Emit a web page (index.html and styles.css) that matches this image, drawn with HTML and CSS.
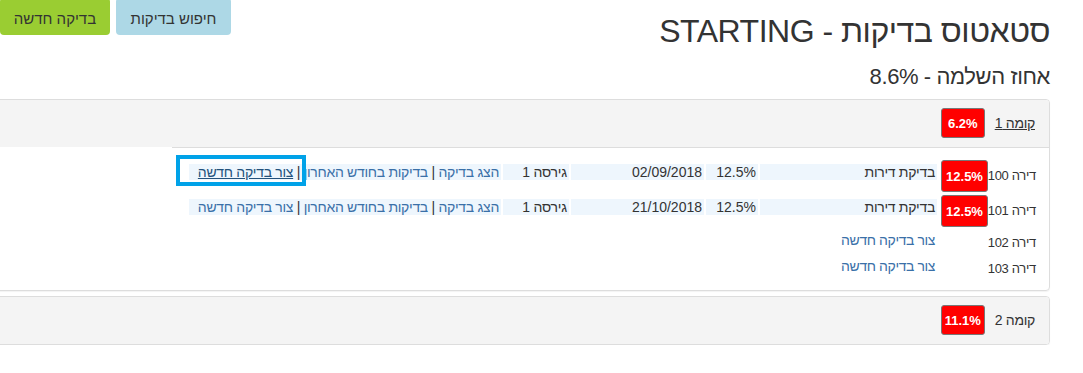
FILE: index.html
```html
<!DOCTYPE html>
<html lang="he" dir="rtl">
<head>
    <meta charset="UTF-8">
    <meta name="viewport" content="width=device-width, initial-scale=1.0">
    <title>סטאטוס בדיקות</title>
    <link rel="stylesheet" href="styles.css">
</head>
<body>
    <div class="page">
        <div class="top-bar">
            <h1 class="page-title">סטאטוס בדיקות - STARTING</h1>
            <div class="actions">
                <button class="btn btn-search">חיפוש בדיקות</button>
                <button class="btn btn-new">בדיקה חדשה</button>
            </div>
        </div>
        <h2 class="progress">אחוז השלמה - 8.6%</h2>

        <div class="panel">
            <div class="panel-heading">
                <a href="#" class="floor-link">קומה 1</a>
                <span class="label label-sm">6.2%</span>
            </div>
            <div class="floor-body">
                <div class="apt">
                    <span class="apt-name">דירה 100</span>
                    <span class="label">12.5%</span>
                    <div class="tests">
                        <span class="c-type">בדיקת דירות</span>
                        <span class="c-pct">12.5%</span>
                        <span class="c-date">02/09/2018</span>
                        <span class="c-ver">גירסה 1</span>
                        <span class="c-links"><a href="#">הצג בדיקה</a> | <a href="#">בדיקות בחודש האחרון</a> | <a href="#" class="active-link">צור בדיקה חדשה </a></span>
                    </div>
                </div>
                <div class="apt">
                    <span class="apt-name">דירה 101</span>
                    <span class="label">12.5%</span>
                    <div class="tests">
                        <span class="c-type">בדיקת דירות</span>
                        <span class="c-pct">12.5%</span>
                        <span class="c-date">21/10/2018</span>
                        <span class="c-ver">גירסה 1</span>
                        <span class="c-links"><a href="#">הצג בדיקה</a> | <a href="#">בדיקות בחודש האחרון</a> | <a href="#">צור בדיקה חדשה</a></span>
                    </div>
                </div>
                <div class="apt apt-empty">
                    <span class="apt-name">דירה 102</span>
                    <span></span>
                    <a href="#" class="new-link">צור בדיקה חדשה</a>
                </div>
                <div class="apt apt-empty">
                    <span class="apt-name">דירה 103</span>
                    <span></span>
                    <a href="#" class="new-link">צור בדיקה חדשה</a>
                </div>
            </div>
        </div>

        <div class="panel">
            <div class="panel-heading">
                <span class="floor-name">קומה 2</span>
                <span class="label label-sm">11.1%</span>
            </div>
        </div>
    </div>
</body>
</html>
```

FILE: styles.css
```css
* {
    box-sizing: border-box;
}

body {
    margin: 0;
    direction: rtl;
    font-family: "Liberation Sans", Arial, sans-serif;
    font-size: 14px;
    color: #333;
    background: #fff;
    overflow: hidden;
}

a {
    color: #3a70a8;
    text-decoration: none;
}

.page {
    padding-right: 33px;
}

.top-bar {
    display: flex;
    justify-content: space-between;
    align-items: flex-start;
}

.page-title {
    margin: 13px 0 0;
    font-size: 32px;
    line-height: 36px;
    font-weight: normal;
    letter-spacing: -0.5px;
}

.actions {
    display: flex;
    gap: 6px;
    margin-top: -2px;
}

.btn {
    border: none;
    border-radius: 4px;
    height: 37px;
    padding: 3px 0 0;
    font-family: inherit;
    font-size: 15px;
    color: #333;
    text-align: center;
}

.btn-search {
    width: 115px;
    background: #add8e6;
}

.btn-new {
    width: 110px;
    background: #9acd32;
}

.progress {
    margin: 15px 0 0;
    font-size: 22px;
    line-height: 26px;
    font-weight: normal;
    letter-spacing: -0.4px;
}

.panel {
    margin: 9px 0 0 -30px;
    border: 1px solid #ddd;
    border-radius: 4px;
    box-shadow: 0 1px 1px rgba(0,0,0,0.05);
    overflow: hidden;
}

.panel + .panel {
    margin-top: 5px;
}

.panel-heading {
    background: #f4f4f4;
    padding: 8px 14px 9px;
    display: flex;
    align-items: center;
    gap: 10px;
    letter-spacing: -0.3px;
}

.floor-link {
    color: #333;
    text-decoration: underline;
}

.label {
    display: flex;
    align-items: center;
    justify-content: center;
    width: 47px;
    height: 32px;
    background: #f00;
    color: #fff;
    font-weight: bold;
    font-size: 13px;
    letter-spacing: 0;
    border: 1px solid #777;
    border-radius: 3px;
}

.label-sm {
    width: 44px;
    height: 30px;
}

.floor-body {
    width: 877px;
    margin-left: auto;
    border-top: 1px solid #ddd;
    padding: 12px 13px 11px 0;
}

.apt {
    display: grid;
    grid-template-columns: 48px 51px 1fr;
    align-items: start;
}

.apt + .apt {
    margin-top: 3px;
}

.apt-name {
    line-height: 20px;
    margin-top: 6px;
    font-size: 13px;
    letter-spacing: -0.3px;
    white-space: nowrap;
}

.apt-empty .apt-name {
    margin-top: 3px;
}

.tests {
    display: flex;
    gap: 2px;
    margin-top: 4px;
}

.tests span {
    background: #eef6fd;
    line-height: 16px;
    padding: 0 2px 0 0;
    white-space: nowrap;
}

.c-type { width: 177px; letter-spacing: -0.3px; }
.c-pct { width: 52px; }
.c-date { width: 133px; }
.c-ver { width: 66px; letter-spacing: -0.2px; }
.c-links { width: 312px; letter-spacing: -0.3px; }

.active-link {
    position: relative;
    color: #23527c;
    text-decoration: underline;
}

.active-link::after {
    content: "";
    position: absolute;
    top: -9px;
    bottom: -6px;
    left: -22px;
    right: -13px;
    border: 4px solid #00a2e8;
}

.new-link {
    justify-self: start;
    line-height: 20px;
    padding-right: 2px;
    letter-spacing: -0.4px;
}
```
